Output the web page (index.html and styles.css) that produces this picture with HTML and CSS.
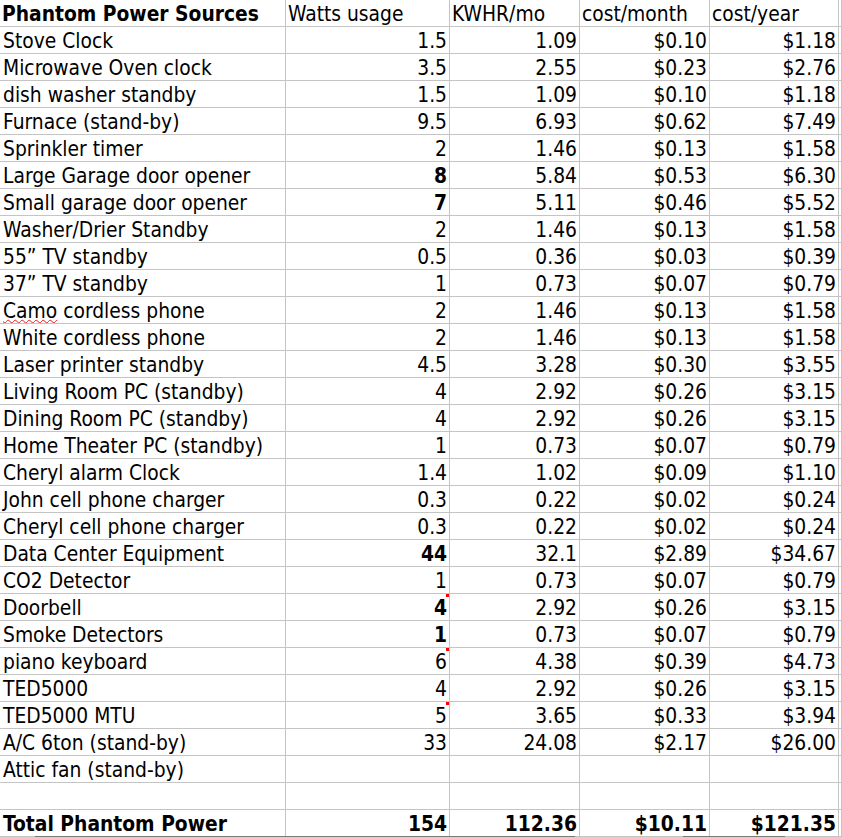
FILE: index.html
```html
<!DOCTYPE html>
<html lang="en">
<head>
<meta charset="utf-8">
<title>Phantom Power Sources</title>
<link rel="stylesheet" href="styles.css">
</head>
<body>
<div class="wrap">
<table class="sheet">
  <colgroup>
    <col class="c-a"><col class="c-b"><col class="c-c"><col class="c-d"><col class="c-e"><col class="c-f">
  </colgroup>
  <tbody>
    <tr class="head"><td class="b">Phantom Power Sources</td><td>Watts usage</td><td>KWHR/mo</td><td>cost/month</td><td>cost/year</td><td></td></tr>
    <tr><td>Stove Clock</td><td class="n">1.5</td><td class="n">1.09</td><td class="n">$0.10</td><td class="n">$1.18</td><td></td></tr>
    <tr><td>Microwave Oven clock</td><td class="n">3.5</td><td class="n">2.55</td><td class="n">$0.23</td><td class="n">$2.76</td><td></td></tr>
    <tr><td>dish washer standby</td><td class="n">1.5</td><td class="n">1.09</td><td class="n">$0.10</td><td class="n">$1.18</td><td></td></tr>
    <tr><td>Furnace (stand-by)</td><td class="n">9.5</td><td class="n">6.93</td><td class="n">$0.62</td><td class="n">$7.49</td><td></td></tr>
    <tr><td>Sprinkler timer</td><td class="n">2</td><td class="n">1.46</td><td class="n">$0.13</td><td class="n">$1.58</td><td></td></tr>
    <tr><td>Large Garage door opener</td><td class="n b">8</td><td class="n">5.84</td><td class="n">$0.53</td><td class="n">$6.30</td><td></td></tr>
    <tr><td>Small garage door opener</td><td class="n b">7</td><td class="n">5.11</td><td class="n">$0.46</td><td class="n">$5.52</td><td></td></tr>
    <tr><td>Washer/Drier Standby</td><td class="n">2</td><td class="n">1.46</td><td class="n">$0.13</td><td class="n">$1.58</td><td></td></tr>
    <tr><td>55” TV standby</td><td class="n">0.5</td><td class="n">0.36</td><td class="n">$0.03</td><td class="n">$0.39</td><td></td></tr>
    <tr><td>37” TV standby</td><td class="n">1</td><td class="n">0.73</td><td class="n">$0.07</td><td class="n">$0.79</td><td></td></tr>
    <tr><td><span class="spell">Camo</span> cordless phone</td><td class="n">2</td><td class="n">1.46</td><td class="n">$0.13</td><td class="n">$1.58</td><td></td></tr>
    <tr><td>White cordless phone</td><td class="n">2</td><td class="n">1.46</td><td class="n">$0.13</td><td class="n">$1.58</td><td></td></tr>
    <tr><td>Laser printer standby</td><td class="n">4.5</td><td class="n">3.28</td><td class="n">$0.30</td><td class="n">$3.55</td><td></td></tr>
    <tr><td>Living Room PC (standby)</td><td class="n">4</td><td class="n">2.92</td><td class="n">$0.26</td><td class="n">$3.15</td><td></td></tr>
    <tr><td>Dining Room PC (standby)</td><td class="n">4</td><td class="n">2.92</td><td class="n">$0.26</td><td class="n">$3.15</td><td></td></tr>
    <tr><td>Home Theater PC (standby)</td><td class="n">1</td><td class="n">0.73</td><td class="n">$0.07</td><td class="n">$0.79</td><td></td></tr>
    <tr><td>Cheryl alarm Clock</td><td class="n">1.4</td><td class="n">1.02</td><td class="n">$0.09</td><td class="n">$1.10</td><td></td></tr>
    <tr><td>John cell phone charger</td><td class="n">0.3</td><td class="n">0.22</td><td class="n">$0.02</td><td class="n">$0.24</td><td></td></tr>
    <tr><td>Cheryl cell phone charger</td><td class="n">0.3</td><td class="n">0.22</td><td class="n">$0.02</td><td class="n">$0.24</td><td></td></tr>
    <tr><td>Data Center Equipment</td><td class="n b">44</td><td class="n">32.1</td><td class="n">$2.89</td><td class="n">$34.67</td><td></td></tr>
    <tr><td>CO2 Detector</td><td class="n">1</td><td class="n">0.73</td><td class="n">$0.07</td><td class="n">$0.79</td><td></td></tr>
    <tr><td>Doorbell</td><td class="n b note">4</td><td class="n">2.92</td><td class="n">$0.26</td><td class="n">$3.15</td><td></td></tr>
    <tr><td>Smoke Detectors</td><td class="n b">1</td><td class="n">0.73</td><td class="n">$0.07</td><td class="n">$0.79</td><td></td></tr>
    <tr><td>piano keyboard</td><td class="n note">6</td><td class="n">4.38</td><td class="n">$0.39</td><td class="n">$4.73</td><td></td></tr>
    <tr><td>TED5000</td><td class="n">4</td><td class="n">2.92</td><td class="n">$0.26</td><td class="n">$3.15</td><td></td></tr>
    <tr><td>TED5000 MTU</td><td class="n note">5</td><td class="n">3.65</td><td class="n">$0.33</td><td class="n">$3.94</td><td></td></tr>
    <tr><td>A/C 6ton (stand-by)</td><td class="n">33</td><td class="n">24.08</td><td class="n">$2.17</td><td class="n">$26.00</td><td></td></tr>
    <tr><td>Attic fan (stand-by)</td><td></td><td></td><td></td><td></td><td></td></tr>
    <tr><td></td><td></td><td></td><td></td><td></td><td></td></tr>
    <tr class="total b"><td>Total Phantom Power</td><td class="n">154</td><td class="n">112.36</td><td class="n">$10.11</td><td class="n">$121.35</td><td></td></tr>
  </tbody>
</table>
<div class="edge edge-1"></div>
<div class="edge edge-2"></div>
</div>
</body>
</html>
```
FILE: styles.css
```css
html, body {
  margin: 0;
  padding: 0;
  background: #ffffff;
  overflow: hidden;
}

.wrap {
  position: relative;
  width: 842px;
  height: 837px;
  overflow: hidden;
}

.sheet {
  table-layout: fixed;
  border-collapse: separate;
  border-spacing: 0;
  width: 842px;
  font-family: "DejaVu Sans Condensed", "DejaVu Sans", sans-serif;
  font-size: 20.8px;
  color: #000000;
}

.c-a { width: 286px; }
.c-b { width: 164px; }
.c-c { width: 130px; }
.c-d { width: 130px; }
.c-e { width: 129px; }
.c-f { width: 3px; }

.sheet td {
  box-sizing: border-box;
  height: 27px;
  padding: 2px 2px 0 3px;
  line-height: 24px;
  border-right: 1px solid #c4c4c4;
  border-bottom: 1px solid #c4c4c4;
  white-space: nowrap;
  overflow: hidden;
  vertical-align: top;
  position: relative;
}

.head td {
  padding-left: 2px;
}

.sheet td.n {
  text-align: right;
  padding-right: 2px;
}

.b {
  font-weight: bold;
}

.spell {
  text-decoration: underline wavy #e02020;
  text-decoration-thickness: 1px;
  text-underline-offset: 1px;
}

.note::after {
  content: "";
  position: absolute;
  top: 0;
  right: 0;
  width: 3px;
  height: 3px;
  background: #ff0000;
}

.edge {
  position: absolute;
  bottom: 0;
  height: 1px;
  background: #7a7a7a;
}

.edge-1 { left: 35px; width: 540px; }
.edge-2 { left: 683px; width: 102px; }
```
